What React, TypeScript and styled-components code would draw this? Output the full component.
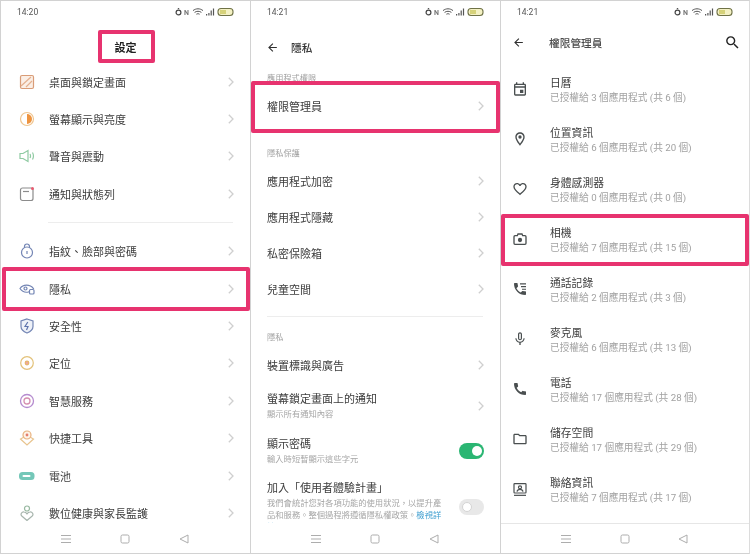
import React from 'react';
import styled, { createGlobalStyle } from 'styled-components';
import { MdArrowBack, MdCall, MdFavoriteBorder, MdMicNone, MdOutlineEvent, MdOutlineFolder, MdOutlineLocationOn, MdSearch } from 'react-icons/md';

const GlobalStyle = createGlobalStyle`
  html, body {
    margin: 0;
    padding: 0;
    background: #fff;
  }
  body {
    font-family: Roboto, "Noto Sans CJK TC", "Noto Sans", sans-serif;
    color: #3a3a3a;
  }
`;

const Screens = styled.div`
  display: flex;
  width: 750px;
  height: 554px;
  overflow: hidden;
  filter: blur(0.45px);
`;

const Phone = styled.section`
  box-sizing: border-box;
  flex: 0 0 250px;
  height: 554px;
  display: flex;
  flex-direction: column;
  border: 1px solid #d2d2d2;
  border-right: 0;
  background: #fff;

  &:last-child {
    border-right: 1px solid #dcdcdc;
  }
`;

const StatusBar = styled.div`
  flex: 0 0 21px;
  display: flex;
  align-items: center;
  justify-content: space-between;
  padding: 0 15px 0 16px;
  font-size: 8.5px;
  color: #555;
`;

const Header = styled.header<{ $height: number; $top?: number; $left?: number }>`
  position: relative;
  flex: 0 0 ${p => p.$height}px;
  box-sizing: border-box;
  padding: ${p => p.$top ?? 0}px 8px 0 ${p => p.$left ?? 11}px;
  display: flex;
  align-items: center;
  gap: 9px;
  color: #2f2f2f;
`;

const CenterTitle = styled.h1`
  position: relative;
  margin: 0 auto;
  font-size: 11px;
  font-weight: 700;
  color: #222;
`;

const PageTitle = styled.h1<{ $indent?: number; $strong?: boolean }>`
  flex: 1;
  margin: 0 0 0 ${p => p.$indent ?? 0}px;
  font-size: 10.7px;
  font-weight: 500;
  color: ${p => (p.$strong ? '#333' : '#4a4a4a')};
`;

const Content = styled.div<{ $top?: number }>`
  flex: 1;
  min-height: 0;
  overflow: hidden;
  padding-top: ${p => p.$top ?? 0}px;
`;

const Row = styled.div<{ $height?: number }>`
  position: relative;
  box-sizing: border-box;
  height: ${p => p.$height ?? 36}px;
  display: flex;
  align-items: center;
  padding: 0 16px;
  font-size: 11px;
  color: #3c3c3c;
`;

const IconSlot = styled.span`
  flex: 0 0 30px;
  display: flex;
  align-items: center;
  margin-left: 2px;
`;

const RowLabel = styled.span`
  flex: 1;
  white-space: nowrap;
`;

const Chevron = styled.svg`
  flex: none;
  width: 6px;
  height: 10px;
  margin-left: auto;
  fill: none;
  stroke: #cfcfcf;
  stroke-width: 1.3;
`;

const Divider = styled.hr<{ $inset: number; $above: number; $below: number }>`
  height: 1px;
  border: 0;
  background: #ededed;
  margin: ${p => p.$above}px 17px ${p => p.$below}px ${p => p.$inset}px;
`;

const SectionLabel = styled.div<{ $gap?: number }>`
  height: 20px;
  margin-top: ${p => p.$gap ?? 0}px;
  padding-left: 16px;
  font-size: 8.2px;
  line-height: 20px;
  color: #a2a2a2;
`;

const DetailRow = styled.div`
  box-sizing: border-box;
  display: flex;
  align-items: center;
  min-height: 45px;
  padding: 8px 16px 7px 16px;
`;

const DetailText = styled.div`
  width: 176px;
  flex: none;
`;

const DetailTitle = styled.div`
  font-size: 11px;
  line-height: 15px;
  color: #3c3c3c;
  white-space: nowrap;
`;

const DetailSub = styled.div`
  margin-top: 1px;
  font-size: 8.3px;
  line-height: 12px;
  color: #a6a6a6;
`;

const DetailLink = styled.span`
  color: #3f9fd0;
`;

const Toggle = styled.span<{ $on?: boolean }>`
  position: relative;
  flex: none;
  width: 25px;
  height: 16px;
  margin-left: auto;
  border-radius: 8px;
  background: ${p => (p.$on ? '#2bb673' : '#e8e8e8')};

  &::after {
    content: '';
    position: absolute;
    top: 3px;
    left: ${p => (p.$on ? '12.5px' : '3px')};
    width: 10px;
    height: 10px;
    border-radius: 50%;
    box-sizing: border-box;
    background: #fff;
    border: ${p => (p.$on ? '0' : '1.5px solid #d4d4d4')};
  }
`;

const PermissionRow = styled.div`
  position: relative;
  box-sizing: border-box;
  height: 50px;
  display: flex;
  align-items: center;
`;

const PermissionIcon = styled.span`
  flex: 0 0 37px;
  display: flex;
  justify-content: center;
  margin: -4px 12px 0 0;
  color: #4a4f50;
  font-size: 16px;

  svg {
    display: block;
    width: 16px;
    height: 16px;
  }
`;

const PermissionTitle = styled.div`
  font-size: 10.8px;
  line-height: 14px;
  color: #3c3c3c;
`;

const PermissionSub = styled.div`
  font-size: 9.7px;
  line-height: 14px;
  color: #a2a2a2;
  white-space: nowrap;
`;

const Highlight = styled.span<{ $inset: string }>`
  position: absolute;
  inset: ${p => p.$inset};
  box-sizing: border-box;
  border: 4px solid #e7336f;
  border-radius: 2px;
  pointer-events: none;
`;

const NavBar = styled.nav<{ $line?: boolean }>`
  flex: 0 0 30px;
  box-sizing: border-box;
  display: flex;
  align-items: center;
  justify-content: space-between;
  padding: 0 61px 0 60px;
  background: #fff;
  border-top: 1px solid ${p => (p.$line ? '#e6e6e6' : 'transparent')};

  svg {
    width: 10px;
    height: 10px;
    fill: none;
    stroke: #adadad;
    stroke-width: 1;
  }
`;

const StatusIcons = () => (
  <svg width="60" height="10" viewBox="0 0 60 10">
    <circle cx="3.5" cy="5.5" r="2.4" fill="none" stroke="#444" strokeWidth="1.2" />
    <path d="M2.8 1.6h1.4" stroke="#444" strokeWidth="1" />
    <text x="9" y="8" fontSize="7" fontWeight="700" fill="#777" fontFamily="Roboto, sans-serif">N</text>
    <path d="M18 3.6c3-2.4 7-2.4 10 0M19.6 5.4c2-1.5 4.8-1.5 6.8 0M21.4 7.2c.9-.6 2.3-.6 3.2 0" fill="none" stroke="#555" strokeWidth="1" />
    <path d="M31 7h1.2v1.5H31zM33.3 6h1.2v2.5h-1.2zM35.6 3.5h1.2v5h-1.2zM37.9 1.5h1.2v7h-1.2z" fill="#555" />
    <rect x="43" y="1.5" width="15" height="7" rx="3" fill="#f4f1c4" stroke="#6f7247" strokeWidth="1.1" />
    <rect x="45" y="3" width="6" height="4" fill="#d6d27a" />
  </svg>
);

const ChevronRight = () => (
  <Chevron viewBox="0 0 6 10">
    <path d="M.8.8 5 5 .8 9.2" />
  </Chevron>
);

const SoftIcon = ({ children }: { children: React.ReactNode }) => (
  <svg width="16" height="16" viewBox="0 0 16 16" fill="none" strokeWidth="1.2">
    {children}
  </svg>
);

const settingsGroupOne = [
  {
    label: '桌面與鎖定畫面',
    icon: (
      <SoftIcon>
        <rect x="1.5" y="1.5" width="13" height="13" rx="1.5" stroke="#d99c77" fill="#fbefe6" />
        <path d="M2 12 12 3M7 13l6-6" stroke="#e4b08f" />
      </SoftIcon>
    ),
  },
  {
    label: '螢幕顯示與亮度',
    icon: (
      <SoftIcon>
        <circle cx="8" cy="8" r="6.5" stroke="#efc58f" />
        <path d="M8 3a5 5 0 0 1 0 10z" fill="#ee9440" />
      </SoftIcon>
    ),
  },
  {
    label: '聲音與震動',
    icon: (
      <SoftIcon>
        <path d="M1 5.5h3L9 2.5v11L4 10.5H1z" stroke="#8fcaa2" />
        <path d="M11 6c.7 1.3.7 2.7 0 4M13.5 4.5c1.2 2.2 1.2 4.8 0 7" stroke="#8fcaa2" />
      </SoftIcon>
    ),
  },
  {
    label: '通知與狀態列',
    icon: (
      <SoftIcon>
        <rect x="1.5" y="2" width="12.5" height="12.5" rx="2" stroke="#8c8c8c" />
        <path d="M4 5.5h6" stroke="#8c8c8c" />
        <circle cx="13.5" cy="2.5" r="1.5" fill="#e75a70" />
      </SoftIcon>
    ),
  },
];

const settingsGroupTwo = [
  {
    label: '指紋、臉部與密碼',
    icon: (
      <SoftIcon>
        <circle cx="8" cy="9.5" r="5.5" stroke="#7385b4" />
        <path d="M5.5 5V3.5a2.5 2.5 0 0 1 5 0V5M8 8v3" stroke="#7385b4" />
      </SoftIcon>
    ),
  },
  {
    label: '隱私',
    highlight: '-3px 0 -4px 1px',
    icon: (
      <SoftIcon>
        <path d="M1 7.5C4 3 11 3 14.5 7.5 13 9.5 11.5 10.5 9.5 11 6 11.8 3 10.5 1 7.5z" stroke="#7385b4" />
        <circle cx="6.5" cy="7.5" r="1.5" stroke="#7385b4" />
        <rect x="10.5" y="8.5" width="4.5" height="4.5" rx="1" fill="#fff" stroke="#7385b4" />
      </SoftIcon>
    ),
  },
  {
    label: '安全性',
    icon: (
      <SoftIcon>
        <path d="M8 1 14 3v5.5c0 3-3 5.3-6 6.5-3-1.2-6-3.5-6-6.5V3z" stroke="#7385b4" fill="#eef1f8" />
        <path d="M8.8 4 6 8.5h3L7.5 12" stroke="#5f74ad" />
      </SoftIcon>
    ),
  },
  {
    label: '定位',
    icon: (
      <SoftIcon>
        <circle cx="8" cy="8" r="6.3" stroke="#e3c27a" />
        <circle cx="8" cy="8" r="1.8" fill="#f0a6a0" stroke="#e5b569" />
      </SoftIcon>
    ),
  },
  {
    label: '智慧服務',
    icon: (
      <SoftIcon>
        <circle cx="8" cy="8" r="6.5" stroke="#b58bcf" strokeWidth="1.3" />
        <circle cx="8" cy="8" r="3" stroke="#d48fb0" strokeWidth="1.3" />
      </SoftIcon>
    ),
  },
  {
    label: '快捷工具',
    icon: (
      <SoftIcon>
        <path d="M5 7 1.5 9 8 15l6.5-6L11 7" stroke="#e8c48f" />
        <circle cx="8" cy="5" r="4" stroke="#e8b27f" fill="#fdf3e8" />
        <circle cx="8" cy="5" r="1.4" fill="#e57d6c" />
      </SoftIcon>
    ),
  },
  {
    label: '電池',
    icon: (
      <SoftIcon>
        <rect x="0" y="4" width="15.5" height="8" rx="3.5" fill="#74c7b8" />
        <rect x="3.5" y="7" width="8" height="2" rx="1" fill="#fff" />
      </SoftIcon>
    ),
  },
  {
    label: '數位健康與家長監護',
    icon: (
      <SoftIcon>
        <circle cx="8" cy="3.5" r="2.5" stroke="#97b8a0" />
        <path d="M8 15.5 2.8 11c-1.8-1.8 0-4.3 2.2-4 1.2.1 2.3.8 3 1.8.7-1 1.8-1.7 3-1.8 2.2-.3 4 2.2 2.2 4z" stroke="#a7b5ad" />
      </SoftIcon>
    ),
  },
];

const privacyProtection = ['應用程式加密', '應用程式隱藏', '私密保險箱', '兒童空間'];

const CameraIcon = () => (
  <svg viewBox="0 0 24 24" fill="none" stroke="currentColor" strokeWidth="2">
    <path d="M3 8.5A1.5 1.5 0 0 1 4.5 7H8l1-2.500h6L16 7h3.500A1.5 1.5 0 0 1 21 8.500v10a1.500 1.500 0 0 1-1.500 1.500h-15A1.500 1.500 0 0 1 3 18.500z" />
    <circle cx="12" cy="13.5" r="3.2" fill="currentColor" stroke="none" />
  </svg>
);

const CallLogIcon = () => (
  <svg viewBox="0 0 24 24" fill="currentColor">
    <path d="M6.62 10.79c1.44 2.83 3.76 5.14 6.59 6.59l2.2-2.2c.27-.27.67-.36 1.02-.24 1.12.37 2.33.57 3.57.57.55 0 1 .45 1 1V20c0 .55-.45 1-1 1-9.39 0-17-7.61-17-17 0-.55.45-1 1-1h3.5c.55 0 1 .45 1 1 0 1.25.2 2.45.57 3.57.11.35.03.74-.25 1.02l-2.2 2.2z" />
    <path d="M12 3.5h9v1.8h-9zM13.5 7.5H21v1.8h-7.5zM15 11.5h6v1.8h-6z" />
  </svg>
);

const ContactsIcon = () => (
  <svg viewBox="0 0 24 24" fill="none" stroke="currentColor" strokeWidth="1.8">
    <rect x="3" y="4" width="18" height="14" rx="1" />
    <path d="M3 21.5h18" />
    <circle cx="12" cy="9.5" r="2.3" />
    <path d="M7.5 16c.5-2.4 2.3-3.3 4.5-3.3s4 .9 4.500 3.300" />
  </svg>
);

const permissions = [
  { title: '日曆', sub: '已授權給 3 個應用程式 (共 6 個)', icon: <MdOutlineEvent /> },
  { title: '位置資訊', sub: '已授權給 6 個應用程式 (共 20 個)', icon: <MdOutlineLocationOn /> },
  { title: '身體感測器', sub: '已授權給 0 個應用程式 (共 0 個)', icon: <MdFavoriteBorder /> },
  { title: '相機', sub: '已授權給 7 個應用程式 (共 15 個)', icon: <CameraIcon />, highlight: '-2px 0 0 0' },
  { title: '通話記錄', sub: '已授權給 2 個應用程式 (共 3 個)', icon: <CallLogIcon /> },
  { title: '麥克風', sub: '已授權給 6 個應用程式 (共 13 個)', icon: <MdMicNone /> },
  { title: '電話', sub: '已授權給 17 個應用程式 (共 28 個)', icon: <MdCall /> },
  { title: '儲存空間', sub: '已授權給 17 個應用程式 (共 29 個)', icon: <MdOutlineFolder /> },
  { title: '聯絡資訊', sub: '已授權給 7 個應用程式 (共 17 個)', icon: <ContactsIcon /> },
];

const Status = ({ time }: { time: string }) => (
  <StatusBar>
    <span>{time}</span>
    <StatusIcons />
  </StatusBar>
);

const Nav = ({ line }: { line?: boolean }) => (
  <NavBar $line={line}>
    <svg viewBox="0 0 10 10">
      <path d="M0 1.5h10M0 5h10M0 8.5h10" />
    </svg>
    <svg viewBox="0 0 10 10">
      <rect x="1" y="1" width="8" height="8" rx="1.5" />
    </svg>
    <svg viewBox="0 0 10 10">
      <path d="M9 1v8L1 5z" />
    </svg>
  </NavBar>
);

const SettingsRow = ({ label, icon, highlight }: { label: string; icon: React.ReactNode; highlight?: string }) => (
  <Row $height={37.4}>
    <IconSlot>{icon}</IconSlot>
    <RowLabel>{label}</RowLabel>
    <ChevronRight />
    {highlight && <Highlight $inset={highlight} />}
  </Row>
);

const LinkRow = ({ label, highlight }: { label: string; highlight?: string }) => (
  <Row>
    <RowLabel>{label}</RowLabel>
    <ChevronRight />
    {highlight && <Highlight $inset={highlight} />}
  </Row>
);

export default function App() {
  return (
    <>
      <GlobalStyle />
      <Screens>
        <Phone>
          <Status time="14:20" />
          <Header $height={41} $top={9} $left={8}>
            <CenterTitle>
              設定
              <Highlight $inset="-9px -18px -8px -17px" />
            </CenterTitle>
          </Header>
          <Content>
            {settingsGroupOne.map(item => (
              <SettingsRow key={item.label} {...item} />
            ))}
            <Divider $inset={47} $above={9} $below={10} />
            {settingsGroupTwo.map(item => (
              <SettingsRow key={item.label} {...item} />
            ))}
          </Content>
          <Nav />
        </Phone>

        <Phone>
          <Status time="14:21" />
          <Header $height={46} $top={4} $left={15}>
            <MdArrowBack size={13} />
            <PageTitle $indent={3} $strong>隱私</PageTitle>
          </Header>
          <Content>
            <SectionLabel>應用程式權限</SectionLabel>
            <LinkRow label="權限管理員" highlight="-7px 0 -9px 0" />
            <SectionLabel $gap={19}>隱私保護</SectionLabel>
            {privacyProtection.map(label => (
              <LinkRow key={label} label={label} />
            ))}
            <Divider $inset={16} $above={9} $below={10} />
            <SectionLabel>隱私</SectionLabel>
            <LinkRow label="裝置標識與廣告" />
            <DetailRow>
              <DetailText>
                <DetailTitle>螢幕鎖定畫面上的通知</DetailTitle>
                <DetailSub>顯示所有通知內容</DetailSub>
              </DetailText>
              <ChevronRight />
            </DetailRow>
            <DetailRow>
              <DetailText>
                <DetailTitle>顯示密碼</DetailTitle>
                <DetailSub>輸入時短暫顯示這些字元</DetailSub>
              </DetailText>
              <Toggle $on />
            </DetailRow>
            <DetailRow>
              <DetailText>
                <DetailTitle>加入「使用者體驗計畫」</DetailTitle>
                <DetailSub>
                  我們會統計您對各項功能的使用狀況，以提升產品和服務。整個過程將遵循隱私權政策。<DetailLink>檢視詳情</DetailLink>
                </DetailSub>
              </DetailText>
              <Toggle />
            </DetailRow>
          </Content>
          <Nav />
        </Phone>

        <Phone>
          <Status time="14:21" />
          <Header $height={40}>
            <MdArrowBack size={13} />
            <PageTitle $indent={15}>權限管理員</PageTitle>
            <MdSearch size={17} color="#222" />
          </Header>
          <Content $top={4}>
            {permissions.map(item => (
              <PermissionRow key={item.title}>
                <PermissionIcon>{item.icon}</PermissionIcon>
                <div>
                  <PermissionTitle>{item.title}</PermissionTitle>
                  <PermissionSub>{item.sub}</PermissionSub>
                </div>
                {item.highlight && <Highlight $inset={item.highlight} />}
              </PermissionRow>
            ))}
          </Content>
          <Nav line />
        </Phone>
      </Screens>
    </>
  );
}
